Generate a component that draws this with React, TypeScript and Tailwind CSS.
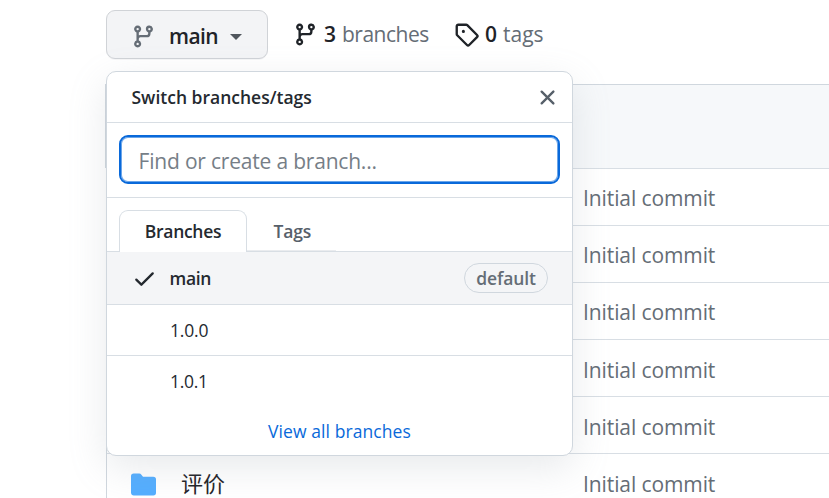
import type { ReactNode } from 'react';

const ICONS = {
  branch:
    'M11.75 2.5a.75.75 0 100 1.5.75.75 0 000-1.5zm-2.25.75a2.25 2.25 0 113 2.122V6A2.5 2.5 0 0110 8.5H6a1 1 0 00-1 1v1.128a2.251 2.251 0 11-1.5 0V5.372a2.25 2.25 0 111.5 0v1.836A2.492 2.492 0 016 7h4a1 1 0 001-1v-.628A2.25 2.25 0 019.5 3.25zM4.25 12a.75.75 0 100 1.5.75.75 0 000-1.5zM3.5 3.25a.75.75 0 111.5 0 .75.75 0 01-1.5 0z',
  tag: 'M2.5 7.775V2.75a.25.25 0 01.25-.25h5.025a.25.25 0 01.177.073l6.25 6.25a.25.25 0 010 .354l-5.025 5.025a.25.25 0 01-.354 0l-6.25-6.25a.25.25 0 01-.073-.177zm-1.5 0V2.75C1 1.784 1.784 1 2.75 1h5.025c.464 0 .91.184 1.238.513l6.25 6.25a1.75 1.75 0 010 2.474l-5.026 5.026a1.75 1.75 0 01-2.474 0l-6.25-6.25A1.75 1.75 0 011 7.775zM6 5a1 1 0 100 2 1 1 0 000-2z',
  x: 'M3.72 3.72a.75.75 0 011.06 0L8 6.94l3.22-3.22a.75.75 0 111.06 1.06L9.06 8l3.22 3.22a.75.75 0 11-1.06 1.06L8 9.06l-3.22 3.22a.75.75 0 01-1.06-1.06L6.94 8 3.72 4.78a.75.75 0 010-1.06z',
  check:
    'M13.78 4.22a.75.75 0 010 1.06l-7.25 7.25a.75.75 0 01-1.06 0L2.22 9.28a.75.75 0 011.06-1.06L6 10.94l6.72-6.72a.75.75 0 011.06 0z',
  folder:
    'M1.75 1A1.75 1.75 0 000 2.75v10.5C0 14.216.784 15 1.75 15h12.5A1.75 1.75 0 0016 13.25v-8.5A1.75 1.75 0 0014.25 3h-6.5a.25.25 0 01-.2-.1l-.9-1.2c-.33-.44-.85-.7-1.4-.7h-3.5z',
};

function Icon({ name, className }: { name: keyof typeof ICONS; className: string }) {
  return (
    <svg viewBox="0 0 16 16" fill="currentColor" className={`size-[25px] shrink-0 ${className}`}>
      <path fillRule="evenodd" d={ICONS[name]} />
    </svg>
  );
}

function FileRow({ children }: { children?: ReactNode }) {
  return (
    <div className="flex h-[57.1px] shrink-0 items-center border-t border-[#d8dee4] pl-6">
      <div className="flex w-[452px] shrink-0 items-center pt-[4px]">{children}</div>
      <span className="pt-[2.4px] text-[21px] leading-7 tracking-[-0.1px] whitespace-nowrap text-[#656d76]">Initial commit</span>
    </div>
  );
}

function BranchMenu() {
  return (
    <div className="absolute top-[71px] left-[106px] flex h-[385px] w-[467px] flex-col overflow-hidden rounded-[10px] border border-[#d0d7de] bg-white text-[17.5px] text-[#24292f] shadow-[0_12px_38px_rgba(140,149,159,0.2)]">
      <div className="flex h-[51px] shrink-0 items-center justify-between border-b border-[#d8dee4] pr-3 pl-[24.5px]">
        <span className="font-semibold">Switch branches/tags</span>
        <Icon name="x" className="text-[#57606a]" />
      </div>
      <div className="h-[75px] shrink-0 border-b border-[#d8dee4] px-3 pt-3">
        <input
          className="block h-[49px] w-[441px] rounded-[9px] border-[2.5px] border-[#0969da] bg-white pt-0.5 pl-[17.6px] text-[21px] tracking-[-0.2px] shadow-[inset_0_0_0_1px_rgba(9,105,218,0.6)] outline-none placeholder:text-[#767e87]"
          placeholder="Find or create a branch..."
        />
      </div>
      <div className="flex h-[54px] shrink-0 items-end border-b border-[#d8dee4] pl-3 font-semibold">
        <div className="-mb-px flex h-[42px] w-32 items-center justify-center rounded-t-[9px] border border-b-0 border-[#d8dee4] bg-white">
          <span className="tracking-[-0.3px]">Branches</span>
        </div>
        <div className="flex h-[41px] w-[89px] items-center border-b border-[#eaecef] pt-0.5 pl-[26.5px]">
          <span className="tracking-[-0.2px] text-[#57606a]">Tags</span>
        </div>
      </div>
      <div className="flex h-[53px] shrink-0 items-center border-b border-[#d8dee4] bg-[#f4f5f7] pr-6 pl-[25px] font-semibold">
        <Icon name="check" className="" />
        <span className="ml-[12.5px] tracking-[-0.3px]">main</span>
        <span className="ml-auto flex h-[30px] w-[84px] items-center justify-center rounded-full border border-[#d0d7de] tracking-[-0.1px] text-[#656d76]">
          default
        </span>
      </div>
      <div className="flex h-[51px] shrink-0 items-center border-b border-[#d8dee4] pl-[63px] tracking-[-0.2px]">1.0.0</div>
      <div className="flex h-[51px] shrink-0 items-center pl-[63px] tracking-[-0.3px]">1.0.1</div>
      <div className="flex h-[48px] shrink-0 items-center justify-center tracking-[0.08px] text-[#0969da]">View all branches</div>
    </div>
  );
}

export default function App() {
  return (
    <div className="relative h-[498px] w-[829px] overflow-hidden bg-white font-['Open_Sans','Noto_Sans_CJK_SC',sans-serif] text-[#1f2328]">
      <div className="flex h-[84px] items-start pt-[10px] pl-[106px]">
        <button className="flex h-[49px] w-[162px] items-center rounded-[9px] border border-[#d0d3d7] bg-[#f3f4f6] pl-6 shadow-[0_1px_0_rgba(31,35,40,0.04)]">
          <Icon name="branch" className="mt-1 text-[#656d76]" />
          <span className="ml-[13px] w-[49px] pt-1 text-left text-[21px] font-semibold tracking-[-0.6px]">main</span>
          <span className="mt-1 ml-[12px] border-x-[6px] border-t-[6px] border-x-transparent border-t-[#50565d]" />
        </button>
        <div className="flex h-[49px] items-center pl-[25px] text-[21px] whitespace-nowrap">
          <Icon name="branch" className="" />
          <span className="ml-[6px] w-[18px] font-semibold">3</span>
          <span className="w-[112px] tracking-[-0.5px] text-[#656d76]">branches</span>
          <Icon name="tag" className="" />
          <span className="ml-[6px] w-[18px] font-semibold">0</span>
          <span className="text-[#656d76]">tags</span>
        </div>
      </div>
      <div className="ml-[105px] h-[84px] border-t border-l border-[#d0d7de] bg-[#f6f8fa]" />
      <div className="ml-[106px] flex flex-col border-l border-[#d0d7de]">
        <FileRow />
        <FileRow />
        <FileRow />
        <FileRow />
        <FileRow />
        <FileRow>
          <Icon name="folder" className="text-[#54aeff]" />
          <span className="-mt-[3px] ml-[25px] text-[22px] leading-[26px]">评价</span>
        </FileRow>
      </div>
      <BranchMenu />
    </div>
  );
}
